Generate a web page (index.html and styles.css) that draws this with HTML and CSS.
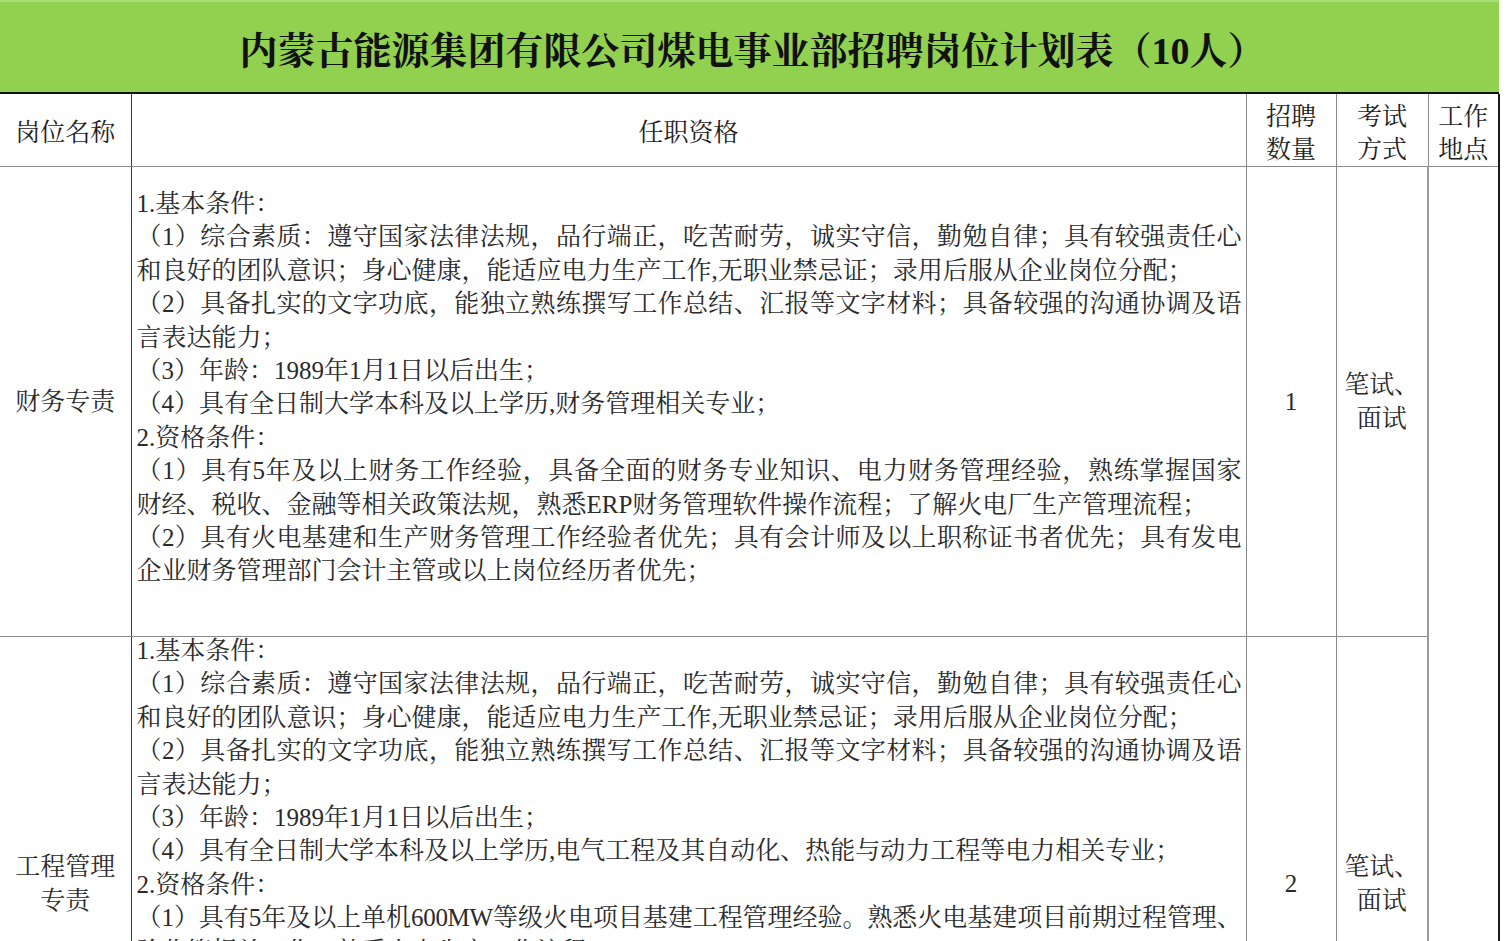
FILE: index.html
```html
<!DOCTYPE html>
<html lang="zh-CN">
<head>
<meta charset="utf-8">
<title>招聘岗位计划表</title>
<link rel="stylesheet" href="styles.css">
</head>
<body>
<div class="sheet">
  <div class="title">内蒙古能源集团有限公司煤电事业部招聘岗位计划表（10人）</div>
  <table class="grid">
    <colgroup>
      <col class="c-name">
      <col class="c-req">
      <col class="c-num">
      <col class="c-exam">
      <col class="c-loc">
    </colgroup>
    <thead>
      <tr class="head">
        <th class="b-name">岗位名称</th>
        <th>任职资格</th>
        <th>招聘<br>数量</th>
        <th>考试<br>方式</th>
        <th class="b-loc">工作<br>地点</th>
      </tr>
    </thead>
    <tbody>
      <tr class="row1">
        <td class="b-name">财务专责</td>
        <td class="req req1">
          <div class="ln">1.基本条件：</div>
          <div class="ln j">（1）综合素质：遵守国家法律法规，品行端正，吃苦耐劳，诚实守信，勤勉自律；具有较强责任心</div>
          <div class="ln">和良好的团队意识；身心健康，能适应电力生产工作,无职业禁忌证；录用后服从企业岗位分配；</div>
          <div class="ln j">（2）具备扎实的文字功底，能独立熟练撰写工作总结、汇报等文字材料；具备较强的沟通协调及语</div>
          <div class="ln">言表达能力；</div>
          <div class="ln">（3）年龄：1989年1月1日以后出生；</div>
          <div class="ln">（4）具有全日制大学本科及以上学历,财务管理相关专业；</div>
          <div class="ln">2.资格条件：</div>
          <div class="ln j">（1）具有5年及以上财务工作经验，具备全面的财务专业知识、电力财务管理经验，熟练掌握国家</div>
          <div class="ln">财经、税收、金融等相关政策法规，熟悉ERP财务管理软件操作流程；了解火电厂生产管理流程；</div>
          <div class="ln j">（2）具有火电基建和生产财务管理工作经验者优先；具有会计师及以上职称证书者优先；具有发电</div>
          <div class="ln">企业财务管理部门会计主管或以上岗位经历者优先；</div>
        </td>
        <td class="num">1</td>
        <td class="exam">笔试、<br>面试</td>
        <td class="b-loc loc" rowspan="2"></td>
      </tr>
      <tr class="row2">
        <td class="b-name">工程管理<br>专责</td>
        <td class="req req2">
          <div class="ln first">1.基本条件：</div>
          <div class="ln j">（1）综合素质：遵守国家法律法规，品行端正，吃苦耐劳，诚实守信，勤勉自律；具有较强责任心</div>
          <div class="ln">和良好的团队意识；身心健康，能适应电力生产工作,无职业禁忌证；录用后服从企业岗位分配；</div>
          <div class="ln j">（2）具备扎实的文字功底，能独立熟练撰写工作总结、汇报等文字材料；具备较强的沟通协调及语</div>
          <div class="ln">言表达能力；</div>
          <div class="ln">（3）年龄：1989年1月1日以后出生；</div>
          <div class="ln">（4）具有全日制大学本科及以上学历,电气工程及其自动化、热能与动力工程等电力相关专业；</div>
          <div class="ln">2.资格条件：</div>
          <div class="ln j tight">（1）具有5年及以上单机600MW等级火电项目基建工程管理经验。熟悉火电基建项目前期过程管理、</div>
          <div class="ln">验收等相关工作，熟悉火电生产工作流程；</div>
          <div class="ln j">（2）具有火电基建工程管理工作经验者优先；具有工程师及以上职称证书者优先；具有发电企业</div>
          <div class="ln">工程管理部门主管或以上岗位经历者优先；</div>
        </td>
        <td class="num">2</td>
        <td class="exam">笔试、<br>面试</td>
      </tr>
    </tbody>
  </table>
</div>
</body>
</html>
```
FILE: styles.css
```css
html, body {
  margin: 0;
  padding: 0;
  background: #ffffff;
}

body {
  font-family: "Liberation Serif", "Noto Serif CJK SC", "Noto Sans CJK SC", serif;
  color: #2a2a2a;
  overflow: hidden;
}

.sheet {
  width: 1499px;
}

.title {
  box-sizing: border-box;
  height: 94px;
  background: #92d050;
  border-top: 2px solid #a8dc78;
  border-bottom: 2px solid #111111;
  display: flex;
  align-items: center;
  justify-content: center;
  padding-left: 6px;
  font-size: 38px;
  font-weight: 700;
  color: #111111;
}

.grid {
  width: 1499px;
  border-collapse: collapse;
  table-layout: fixed;
  font-size: 25px;
  line-height: 33.4px;
}

.c-name { width: 131px; }
.c-req { width: 1115px; }
.c-num { width: 90px; }
.c-exam { width: 92px; }
.c-loc { width: 71px; }

.grid th,
.grid td {
  border: 1px solid #8a8a8a;
  padding: 0;
  text-align: center;
  vertical-align: middle;
  font-weight: 400;
}

.grid th {
  color: #1e1e1e;
  border-top: none;
  line-height: 32.5px;
  padding-top: 7px;
}

.b-name {
  border-left: none !important;
  border-right: 1px solid #3a3a3a !important;
}

.b-loc {
  border-right: 2px solid #1a1a1a !important;
}

.loc {
  border-left: 2px solid #9a9a9a !important;
}

.row1 td {
  height: 469px;
}

.row1 td.req1 {
  height: 449px;
  padding-top: 20px;
}

.row2 td {
  height: 493px;
}

.req {
  text-align: left !important;
  vertical-align: top !important;
  padding-left: 5px !important;
  padding-right: 4px !important;
}

.ln {
  white-space: nowrap;
  text-align: left;
}

.ln.first {
  margin-top: -3px;
}

.ln.j {
  text-align: justify;
  text-align-last: justify;
}

.ln.tight {
  letter-spacing: -0.3px;
}

.num,
.exam {
  color: #2a2a2a;
}
```
